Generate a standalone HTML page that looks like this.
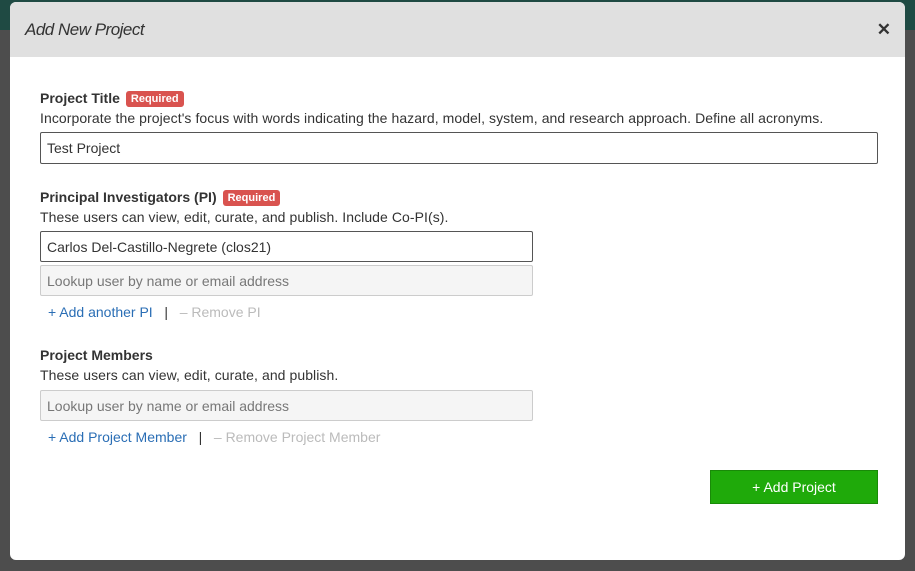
<!DOCTYPE html>
<html><head><style>
body{margin:0;width:915px;height:571px;overflow:hidden;background:#4d4d4d;font-family:"Liberation Sans",sans-serif;position:relative}
.top{position:absolute;left:0;top:0;width:915px;height:30px;background:#1f4a43}
.modal{position:absolute;left:10px;top:2px;width:895px;height:558px;background:#fff;border-radius:6px;overflow:hidden}
.hdr{height:55px;background:#e0e0e0;position:relative}
.hdr .t{position:absolute;left:15px;top:18px;font-size:17px;font-style:italic;color:#333;letter-spacing:-0.5px}
.hdr .x{position:absolute;right:14px;top:18px;font-size:17px;font-weight:bold;color:#333}
.a{position:absolute;font-size:14px;color:#333;white-space:nowrap}
.d{letter-spacing:0.07px}
.b{font-weight:bold}
.req{display:inline-block;background:#d9534f;color:#fff;font-size:11px;font-weight:bold;padding:2px 5px;border-radius:3px;margin-left:6px;vertical-align:1px}
.inp{position:absolute;box-sizing:border-box;border:1px solid #555;border-radius:2px;font-size:14px;color:#333;padding:8px 6px}
.ph{border:1px solid #ccc;background:#f5f5f5;color:#777}
.lk{color:#2a6eb5}.dis{color:#bbb}
.btn{position:absolute;left:700px;top:468px;width:168px;height:34px;background:#1faa0a;border:1px solid #198a08;box-sizing:border-box;color:#fff;font-size:14px;text-align:center;line-height:32px}
</style></head><body>
<div class="top"></div>
<div class="modal">
<div class="hdr"><span class="t">Add New Project</span><span class="x">✕</span></div>
<div class="a b" style="left:30px;top:88px">Project Title<span class="req">Required</span></div>
<div class="a d" style="left:30px;top:108px">Incorporate the project's focus with words indicating the hazard, model, system, and research approach. Define all acronyms.</div>
<div class="inp" style="left:30px;top:130px;width:838px;height:32px;padding-top:7px">Test Project</div>
<div class="a b" style="left:30px;top:187px">Principal Investigators (PI)<span class="req">Required</span></div>
<div class="a d" style="left:30px;top:207px">These users can view, edit, curate, and publish. Include Co-PI(s).</div>
<div class="inp" style="left:30px;top:229px;width:493px;height:31px;padding-top:7px">Carlos Del-Castillo-Negrete (clos21)</div>
<div class="inp ph" style="left:30px;top:263px;width:493px;height:31px;padding-top:7px">Lookup user by name or email address</div>
<div class="a" style="left:38px;top:302px"><span class="lk">+ Add another PI</span> &nbsp; | &nbsp; <span class="dis">– Remove PI</span></div>
<div class="a b" style="left:30px;top:345px">Project Members</div>
<div class="a d" style="left:30px;top:365px">These users can view, edit, curate, and publish.</div>
<div class="inp ph" style="left:30px;top:388px;width:493px;height:31px;padding-top:7px">Lookup user by name or email address</div>
<div class="a" style="left:38px;top:427px"><span class="lk">+ Add Project Member</span> &nbsp; | &nbsp; <span class="dis">– Remove Project Member</span></div>
<div class="btn">+ Add Project</div>
</div>
</body></html>
